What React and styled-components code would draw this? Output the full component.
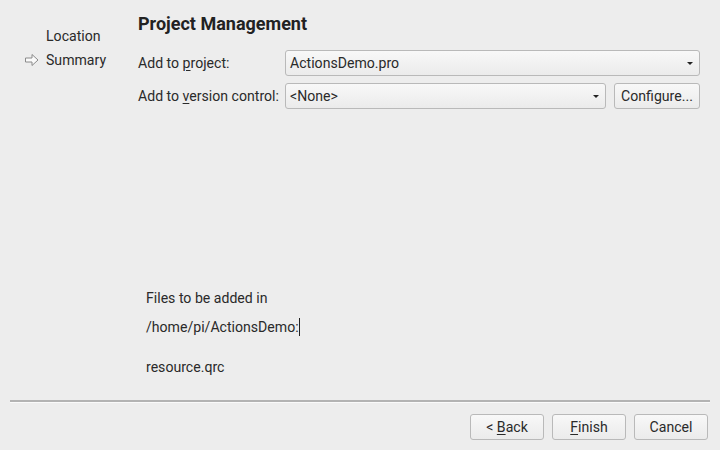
import React from 'react';
import styled, {createGlobalStyle} from 'styled-components';

const Global = createGlobalStyle`
  html, body {
    margin: 0;
    padding: 0;
    background: #ededed;
  }
  body {
    font-family: Roboto, "Noto Sans", sans-serif;
    font-size: 14.1px;
    color: #2a2a2a;
  }
`;

const Wizard = styled.div`
  width: 720px;
  height: 450px;
  display: flex;
  flex-direction: column;
  background: #ededed;
  box-sizing: border-box;
`;

const Body = styled.div`
  flex: 1;
  display: flex;
`;

const Steps = styled.ul`
  list-style: none;
  margin: 0;
  padding: 24px 0 0 24px;
  width: 114px;
  box-sizing: border-box;
  li {
    display: flex;
    align-items: center;
    height: 24px;
    gap: 6px;
  }
`;

const StepMark = styled.span`
  width: 16px;
  display: inline-flex;
  justify-content: center;
`;

const Page = styled.div`
  flex: 1;
  padding: 13px 20px 0 24px;
  display: flex;
  flex-direction: column;
`;

const Title = styled.h1`
  margin: 0 0 15px;
  font-size: 18px;
  font-weight: bold;
  line-height: 22px;
  color: #222;
`;

const Form = styled.div`
  display: grid;
  grid-template-columns: 147px 1fr;
  row-gap: 7px;
  align-items: center;
`;

const Label = styled.span`
  u { text-decoration: underline; text-underline-offset: 2px; }
`;

const Row = styled.div`
  display: flex;
  gap: 8px;
`;

const Combo = styled.div`
  flex: 1;
  height: 26px;
  box-sizing: border-box;
  border: 1px solid #b9b9b9;
  border-radius: 3px;
  background: linear-gradient(#f8f8f8, #ebebeb);
  display: flex;
  align-items: center;
  justify-content: space-between;
  padding: 0 6px 0 4px;
  &::after {
    content: '';
    border-left: 3px solid transparent;
    border-right: 3px solid transparent;
    border-top: 3px solid #222;
  }
`;

const Button = styled.button`
  height: 26px;
  min-width: ${p => p.$w || 74}px;
  box-sizing: border-box;
  border: 1px solid #b9b9b9;
  border-radius: 3px;
  background: linear-gradient(#f8f8f8, #ebebeb);
  font: inherit;
  color: #2a2a2a;
  padding: 0 6px;
  u { text-decoration: underline; text-underline-offset: 2px; }
`;

const Files = styled.div`
  margin: 180px 0 0 8px;
  p { margin: 0; line-height: 18px; }
`;

const Path = styled.p`
  && { margin-top: 11px; }
  &::after {
    content: '';
    display: inline-block;
    width: 1px;
    height: 18px;
    background: #222;
    vertical-align: -4px;
  }
`;

const FileName = styled.p`
  && { margin-top: 22px; }
`;

const Separator = styled.hr`
  margin: 0 10px;
  border: 0;
  height: 2px;
  background: #b3b3b3;
  border-bottom: 1px solid #fafafa;
`;

const Footer = styled.div`
  display: flex;
  justify-content: flex-end;
  gap: 8px;
  padding: 11px 12px 10px;
`;

const Arrow = () => (
  <svg width="16" height="14" viewBox="0 0 16 14">
    <path d="M1.5 5 H8 V1.5 L14 7 L8 12.5 V9 H1.5 Z" fill="#fafafa" stroke="#8a8a8a" strokeWidth="1" strokeLinejoin="round" />
  </svg>
);

export default function App() {
  return (
    <Wizard>
      <Global />
      <Body>
        <Steps>
          <li><StepMark /> Location</li>
          <li><StepMark><Arrow /></StepMark> Summary</li>
        </Steps>
        <Page>
          <Title>Project Management</Title>
          <Form>
            <Label>Add to <u>p</u>roject:</Label>
            <Row><Combo>ActionsDemo.pro</Combo></Row>
            <Label>Add to <u>v</u>ersion control:</Label>
            <Row>
              <Combo>&lt;None&gt;</Combo>
              <Button $w={86}>Configure...</Button>
            </Row>
          </Form>
          <Files>
            <p>Files to be added in</p>
            <Path>/home/pi/ActionsDemo:</Path>
            <FileName>resource.qrc</FileName>
          </Files>
        </Page>
      </Body>
      <Separator />
      <Footer>
        <Button>&lt; <u>B</u>ack</Button>
        <Button><u>F</u>inish</Button>
        <Button>Cancel</Button>
      </Footer>
    </Wizard>
  );
}
